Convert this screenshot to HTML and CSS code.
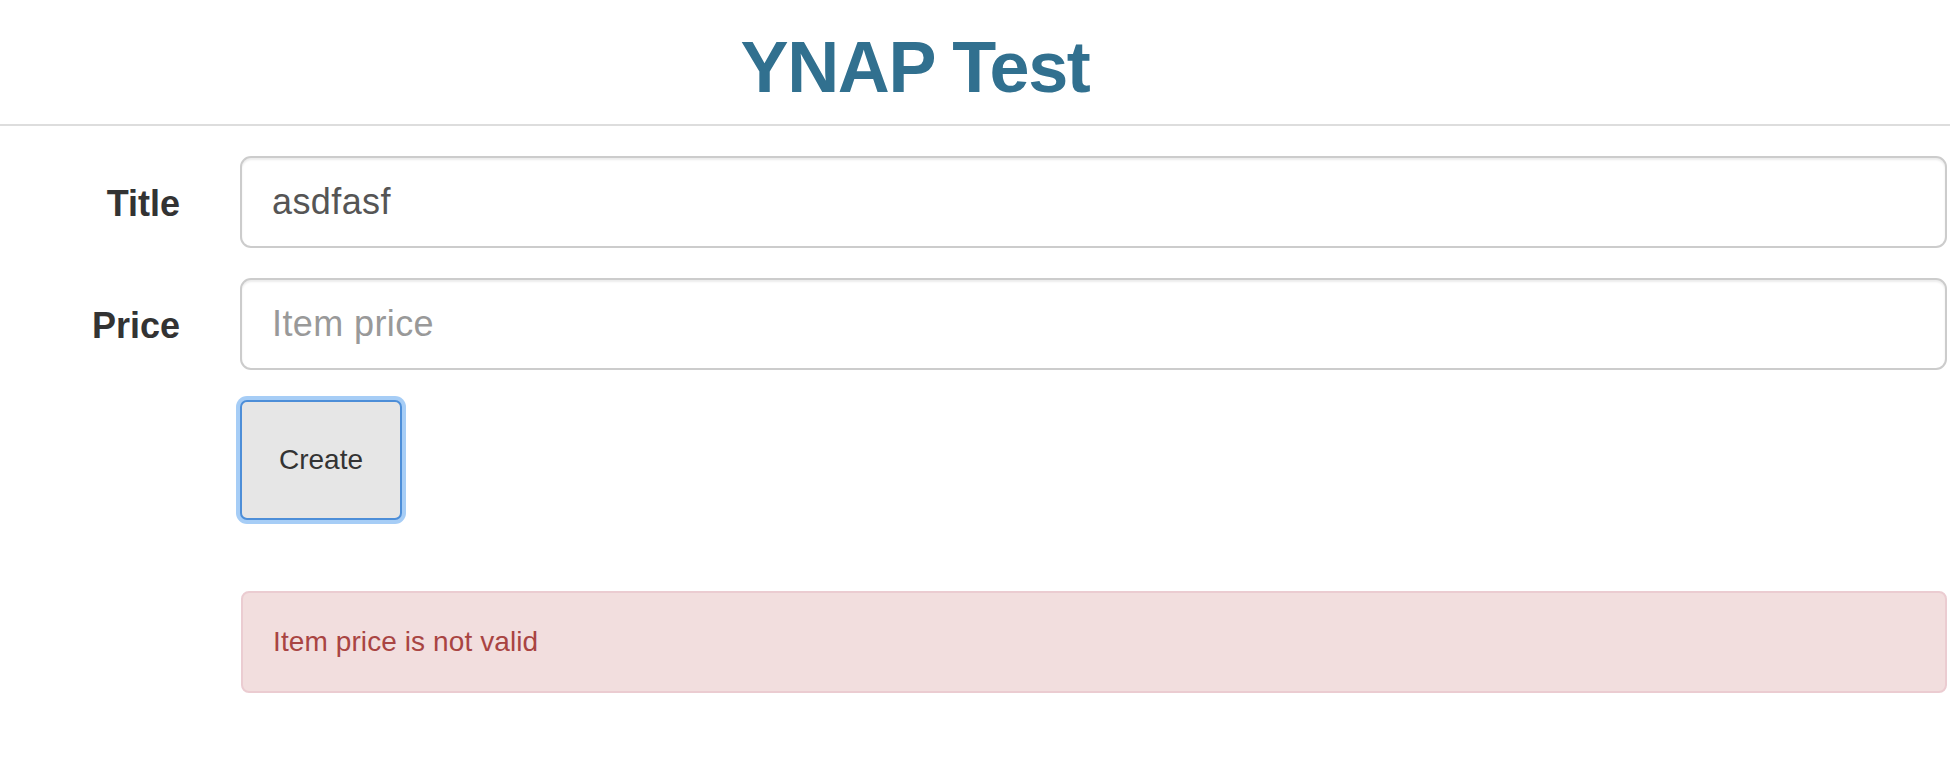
FILE: index.html
```html
<!DOCTYPE html>
<html lang="en">
<head>
<meta charset="utf-8">
<title>YNAP Test</title>
<link rel="stylesheet" href="styles.css">
</head>
<body>
<header class="page-header">
  <h1 class="page-title">YNAP Test</h1>
</header>
<form class="item-form">
  <label class="form-label" for="title">Title</label>
  <input class="form-input" id="title" type="text" value="asdfasf">
  <label class="form-label" for="price">Price</label>
  <input class="form-input" id="price" type="text" placeholder="Item price">
  <div class="form-actions">
    <button type="button" class="btn-create">Create</button>
  </div>
  <div class="alert-error">Item price is not valid</div>
</form>
</body>
</html>
```

FILE: styles.css
```css
html, body {
  margin: 0;
  padding: 0;
  background: #fff;
}
body {
  font-family: "Liberation Sans", Arial, Helvetica, sans-serif;
  color: #333;
}
.page-header {
  padding: 27px 120px 17px 0;
  border-bottom: 2px solid #dddddd;
}
.page-title {
  margin: 0;
  font-size: 72px;
  line-height: 80px;
  font-weight: 700;
  letter-spacing: -1.4px;
  color: #31708f;
  text-align: center;
}
.item-form {
  display: grid;
  grid-template-columns: 180px 1707px;
  column-gap: 60px;
  row-gap: 30px;
  padding-top: 30px;
}
.form-label {
  font-size: 36px;
  font-weight: 700;
  color: #333;
  text-align: right;
  align-self: center;
  padding-top: 3px;
}
.form-input {
  box-sizing: border-box;
  height: 92px;
  width: 100%;
  border: 2px solid #cccccc;
  border-radius: 11px;
  padding: 0 30px;
  font-family: inherit;
  font-size: 36px;
  letter-spacing: 0.4px;
  color: #555;
  background: #fff;
  box-shadow: inset 0 2px 2px rgba(0, 0, 0, 0.075);
  outline: none;
}
.form-input::placeholder {
  color: #999;
}
.form-actions {
  grid-column: 2;
}
.btn-create {
  box-sizing: border-box;
  width: 162px;
  height: 120px;
  background: #e6e6e6;
  border: 2px solid #4d8ed8;
  border-radius: 7px;
  box-shadow: 0 0 0 4px #a6cdf6;
  font-family: inherit;
  font-size: 28px;
  color: #333;
  padding: 0;
  cursor: pointer;
}
.alert-error {
  grid-column: 2;
  margin-top: 41px;
  box-sizing: border-box;
  height: 102px;
  margin-left: 1px;
  display: flex;
  align-items: center;
  padding: 0 30px;
  background: #f2dede;
  border: 2px solid #ebccd1;
  border-radius: 8px;
  font-size: 28px;
  letter-spacing: 0.1px;
  color: #a94442;
}
```
